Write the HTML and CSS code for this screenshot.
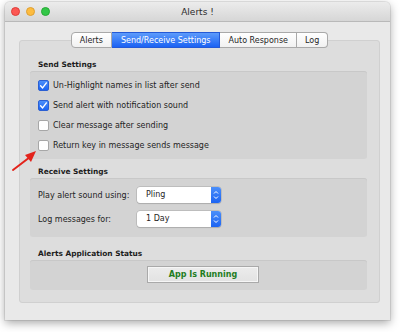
FILE: index.html
```html
<!DOCTYPE html>
<html lang="en">
<head>
	<meta charset="UTF-8">
	<title>Alerts !</title>
	<link rel="stylesheet" href="styles.css">
</head>
<body>
	<div class="window">
		<div class="titlebar">
			<div class="lights">
				<span class="light red"></span>
				<span class="light yellow"></span>
				<span class="light green"></span>
			</div>
			<div class="title">Alerts !</div>
		</div>
		<div class="content">
			<div class="tabs">
				<div class="tab">Alerts</div>
				<div class="tab active">Send/Receive Settings</div>
				<div class="tab">Auto Response</div>
				<div class="tab">Log</div>
			</div>
			<div class="panel">
				<div class="section">
					<div class="section-label">Send Settings</div>
					<div class="group group-checks">
						<div class="check-row"><span class="box checked"><svg viewBox="0 0 11 11" width="11" height="11"><path d="M2.6 5.8 L4.6 7.9 L8.4 2.9" fill="none" stroke="#fff" stroke-width="1.4" stroke-linecap="round" stroke-linejoin="round"/></svg></span>Un-Highlight names in list after send</div>
						<div class="check-row"><span class="box checked"><svg viewBox="0 0 11 11" width="11" height="11"><path d="M2.6 5.8 L4.6 7.9 L8.4 2.9" fill="none" stroke="#fff" stroke-width="1.4" stroke-linecap="round" stroke-linejoin="round"/></svg></span>Send alert with notification sound</div>
						<div class="check-row"><span class="box"></span>Clear message after sending</div>
						<div class="check-row"><span class="box"></span>Return key in message sends message</div>
					</div>
				</div>
				<div class="section section-receive">
					<div class="section-label">Receive Settings</div>
					<div class="group group-popups">
						<div class="popup-row">
							<span class="popup-label">Play alert sound using:</span>
							<div class="popup"><span class="popup-value">Pling</span><span class="popup-arrows"><svg viewBox="0 0 10 16" width="10" height="16"><path d="M3 6.5 L5 4.5 L7 6.5 M3 9.5 L5 11.5 L7 9.5" fill="none" stroke="#fff" stroke-width="1"/></svg></span></div>
						</div>
						<div class="popup-row">
							<span class="popup-label">Log messages for:</span>
							<div class="popup"><span class="popup-value">1 Day</span><span class="popup-arrows"><svg viewBox="0 0 10 16" width="10" height="16"><path d="M3 6.5 L5 4.5 L7 6.5 M3 9.5 L5 11.5 L7 9.5" fill="none" stroke="#fff" stroke-width="1"/></svg></span></div>
						</div>
					</div>
				</div>
				<div class="section section-status">
					<div class="section-label">Alerts Application Status</div>
					<div class="group group-status">
						<div class="status-button">App Is Running</div>
					</div>
				</div>
			</div>
		</div>
	</div>

	<!-- red annotation arrow -->
	<svg class="annotation" width="32" height="30" viewBox="0 0 32 30">
		<line x1="3" y1="24" x2="20" y2="11" stroke="#e3231b" stroke-width="2" stroke-linecap="round"/>
		<polygon points="26,5 15,9 21,16" fill="#e3231b"/>
	</svg>
</body>
</html>
```

FILE: styles.css
```css
* {
	margin: 0;
	padding: 0;
	box-sizing: border-box;
}
body {
	background: #fff;
	font-family: "DejaVu Sans", sans-serif;
	font-size: 8px;
	color: #1e1e1e;
	width: 400px;
	height: 332px;
	overflow: hidden;
	position: relative;
}

/* window */
.window {
	margin: 2px 0 0 5px;
	width: 385px;
	height: 318px;
	background: #e9e9e9;
	border-radius: 5px 5px 0 0;
	box-shadow: 0 3px 10px rgba(0, 0, 0, 0.35), 0 0 0 1px rgba(0, 0, 0, 0.08);
}
.titlebar {
	height: 20px;
	display: grid;
	grid-template-columns: 1fr auto 1fr;
	align-items: center;
	background: linear-gradient(#ececec, #d6d6d6);
	border-bottom: 1px solid #b9b9b9;
	border-radius: 5px 5px 0 0;
}
.lights {
	display: flex;
	gap: 6px;
	padding-left: 6px;
}
.light {
	width: 9px;
	height: 9px;
	border-radius: 50%;
}
.light.red { background: #fc5753; border: 1px solid #df3d38; }
.light.yellow { background: #fdbc40; border: 1px solid #dea033; }
.light.green { background: #33c748; border: 1px solid #27aa35; }
.title {
	font-size: 9px;
	color: #2b2b2b;
}

.content {
	padding: 10px 10px 0 14px;
}

/* tabs */
.tabs {
	display: flex;
	justify-content: center;
	margin-bottom: -8px;
	position: relative;
	z-index: 1;
}
.tab {
	height: 16px;
	line-height: 15px;
	padding: 0 8px;
	background: linear-gradient(#ffffff, #f1f1f1);
	border: 1px solid #a9a9a9;
	border-left: none;
	color: #1e1e1e;
}
.tab:first-child {
	border-left: 1px solid #a9a9a9;
	border-radius: 4px 0 0 4px;
}
.tab:last-child {
	border-radius: 0 4px 4px 0;
}
.tab.active {
	background: linear-gradient(#5d9bfb, #1b62f3);
	border-color: #2459d6;
	color: #fff;
	padding: 0 9px;
}

/* tab panel */
.panel {
	height: 263px;
	background: #dddddd;
	border: 1px solid #d0d0d0;
	border-radius: 3px;
	padding: 18px 12px 0 10px;
}
.section-label {
	font-weight: bold;
	font-size: 7.4px;
	line-height: 12px;
	padding-left: 8px;
	color: #1c1c1c;
}
.section-receive { margin-top: 7px; }
.section-status { margin-top: 11px; }
.group {
	background: #d3d3d3;
	border-radius: 3px;
	box-shadow: inset 0 1px 0 #c8c8c8;
}

.group-checks {
	height: 88px;
	padding: 4px 8px;
}
.check-row {
	height: 20px;
	display: flex;
	align-items: center;
}
.box {
	width: 11px;
	height: 11px;
	margin-right: 4px;
	border-radius: 2px;
	background: #fff;
	border: 1px solid #a7a7a7;
	display: flex;
	align-items: center;
	justify-content: center;
}
.box.checked {
	background: linear-gradient(#4b8ffa, #1c64f2);
	border-color: #2a5fd3;
}
.box svg { flex: none; }

.group-popups {
	height: 59px;
	padding: 9px 8px 0;
	display: flex;
	flex-direction: column;
	gap: 8px;
}
.popup-row {
	display: flex;
	align-items: center;
	height: 16px;
}
.popup-label {
	width: 99px;
}
.popup {
	width: 84px;
	height: 16px;
	display: flex;
	border-radius: 3px;
	background: #fff;
	box-shadow: 0 0 0 0.5px #a8a8a8, 0 1px 1px rgba(0, 0, 0, 0.15);
	overflow: hidden;
}
.popup-value {
	flex: 1;
	line-height: 16px;
	padding-left: 9px;
}
.popup-arrows {
	width: 10px;
	background: linear-gradient(#4b8ffa, #1c64f2);
	display: flex;
}

.group-status {
	height: 30px;
	padding: 6px 0 0 117px;
}
.status-button {
	width: 112px;
	height: 17px;
	line-height: 15px;
	text-align: center;
	background: linear-gradient(#ececec, #e2e2e2);
	border: 1px solid #a9a9a9;
	box-shadow: inset 0 0 0 1px #f6f6f6;
	color: #1f7d1f;
	font-weight: bold;
	font-size: 8px;
}

/* annotation overlay */
.annotation {
	position: absolute;
	left: 10px;
	top: 146px;
}
```
